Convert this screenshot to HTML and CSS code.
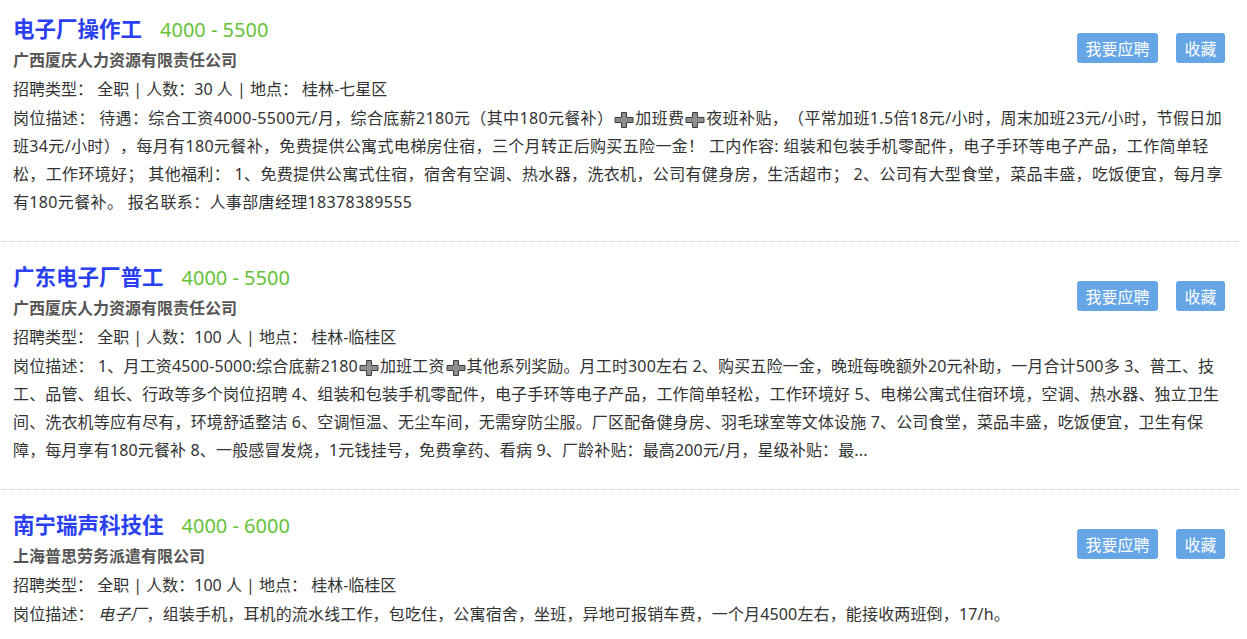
FILE: index.html
```html
<!DOCTYPE html>
<html lang="zh-CN">
<head>
    <meta charset="UTF-8">
    <meta name="viewport" content="width=device-width, initial-scale=1.0">
    <title>招聘信息</title>
    <link rel="stylesheet" href="styles.css">
</head>
<body>
    <div class="job-list">
        <div class="job-item">
            <div class="job-head">
                <div class="job-main">
                    <div class="job-title"><a href="#">电子厂操作工</a><span class="salary">4000 - 5500</span></div>
                    <div class="company">广西厦庆人力资源有限责任公司</div>
                </div>
                <div class="actions">
                    <button type="button" class="btn">我要应聘</button>
                    <button type="button" class="btn">收藏</button>
                </div>
            </div>
            <div class="info">招聘类型： 全职 | 人数：30 人 | 地点： 桂林-七星区</div>
            <div class="desc desc-loose">岗位描述： 待遇：综合工资4000-5500元/月，综合底薪2180元（其中180元餐补）<svg class="plus" viewBox="0 0 22 16"><path d="M8.5 .5h5v5H20v5h-6.5v5h-5v-5H2v-5h6.5z"/></svg>加班费<svg class="plus" viewBox="0 0 22 16"><path d="M8.5 .5h5v5H20v5h-6.5v5h-5v-5H2v-5h6.5z"/></svg>夜班补贴，（平常加班1.5倍18元/小时，周末加班23元/小时，节假日加班34元/小时），每月有180元餐补，免费提供公寓式电梯房住宿，三个月转正后购买五险一金！ 工内作容: 组装和包装手机零配件，电子手环等电子产品，工作简单轻松，工作环境好； 其他福利： 1、免费提供公寓式住宿，宿舍有空调、热水器，洗衣机，公司有健身房，生活超市； 2、公司有大型食堂，菜品丰盛，吃饭便宜，每月享有180元餐补。 报名联系：人事部唐经理18378389555</div>
        </div>

        <div class="job-item">
            <div class="job-head">
                <div class="job-main">
                    <div class="job-title"><a href="#">广东电子厂普工</a><span class="salary">4000 - 5500</span></div>
                    <div class="company">广西厦庆人力资源有限责任公司</div>
                </div>
                <div class="actions">
                    <button type="button" class="btn">我要应聘</button>
                    <button type="button" class="btn">收藏</button>
                </div>
            </div>
            <div class="info">招聘类型： 全职 | 人数：100 人 | 地点： 桂林-临桂区</div>
            <div class="desc">岗位描述： 1、月工资4500-5000:综合底薪2180<svg class="plus" viewBox="0 0 22 16"><path d="M8.5 .5h5v5H20v5h-6.5v5h-5v-5H2v-5h6.5z"/></svg>加班工资<svg class="plus" viewBox="0 0 22 16"><path d="M8.5 .5h5v5H20v5h-6.5v5h-5v-5H2v-5h6.5z"/></svg>其他系列奖励。月工时300左右 2、购买五险一金，晚班每晚额外20元补助，一月合计500多 3、普工、技工、品管、组长、行政等多个岗位招聘 4、组装和包装手机零配件，电子手环等电子产品，工作简单轻松，工作环境好 5、电梯公寓式住宿环境，空调、热水器、独立卫生间、洗衣机等应有尽有，环境舒适整洁 6、空调恒温、无尘车间，无需穿防尘服。厂区配备健身房、羽毛球室等文体设施 7、公司食堂，菜品丰盛，吃饭便宜，卫生有保障，每月享有180元餐补 8、一般感冒发烧，1元钱挂号，免费拿药、看病 9、厂龄补贴：最高200元/月，星级补贴：最...</div>
        </div>

        <div class="job-item">
            <div class="job-head">
                <div class="job-main">
                    <div class="job-title"><a href="#">南宁瑞声科技住</a><span class="salary">4000 - 6000</span></div>
                    <div class="company">上海普思劳务派遣有限公司</div>
                </div>
                <div class="actions">
                    <button type="button" class="btn">我要应聘</button>
                    <button type="button" class="btn">收藏</button>
                </div>
            </div>
            <div class="info">招聘类型： 全职 | 人数：100 人 | 地点： 桂林-临桂区</div>
            <div class="desc">岗位描述： <em>电子厂</em>，组装手机，耳机的流水线工作，包吃住，公寓宿舍，坐班，异地可报销车费，一个月4500左右，能接收两班倒，17/h。</div>
        </div>
    </div>
</body>
</html>
```

FILE: styles.css
```css
body {
    margin: 0;
    font-family: "Noto Sans", "Noto Sans CJK SC", sans-serif;
    background-color: #fff;
    color: #333;
    font-size: 16px;
    text-spacing-trim: space-all;
}

.job-list {
    margin-right: 8px;
}

.job-item {
    padding: 20px 7px 25px 13px;
    border-bottom: 1px dotted #c8c8c8;
}

.job-item:first-child {
    padding-top: 14px;
}

.job-head {
    display: flex;
    justify-content: space-between;
    align-items: flex-start;
}

.job-title {
    line-height: 30px;
}

.job-title a {
    font-size: 21.5px;
    font-weight: bold;
    color: #2b3ff2;
    text-decoration: none;
}

.salary {
    margin-left: 18px;
    font-size: 20px;
    color: #67c23a;
}

.company {
    line-height: 29px;
    font-weight: bold;
    color: #555;
}

.actions {
    display: flex;
    gap: 18px;
    margin-top: 19px;
    margin-right: 7px;
}

.btn {
    height: 30px;
    padding: 0 8.5px;
    font-family: inherit;
    font-size: 16px;
    color: #fff;
    background-color: #66a6e6;
    border: none;
    border-radius: 3px;
    cursor: pointer;
}

.btn:hover {
    background-color: #5596d8;
}

.info {
    line-height: 29px;
}

.desc {
    line-height: 28px;
    letter-spacing: 0.15px;
}

/* first description runs a touch wider in the original */
.desc-loose {
    letter-spacing: 0.35px;
}

.plus {
    width: 22px;
    height: 16px;
    vertical-align: -4px;
    fill: #8e8e8e;
    stroke: #3c3c3c;
    stroke-width: 1;
}
```
